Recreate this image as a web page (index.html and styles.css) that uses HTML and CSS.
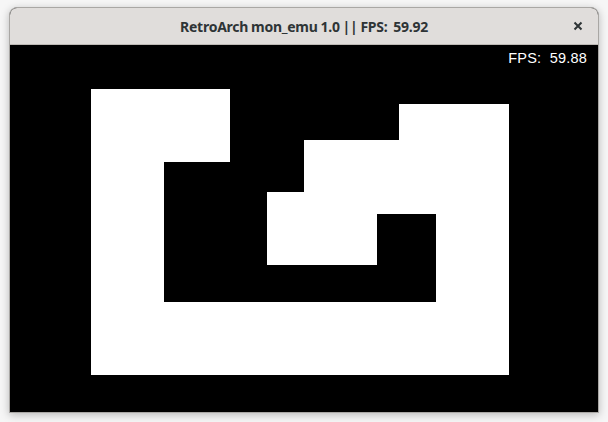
FILE: index.html
```html
<!DOCTYPE html>
<html>
<head>
<meta charset="utf-8">
<link rel="stylesheet" href="styles.css">
</head>
<body>
<div class="window">
  <div class="titlebar">
    <span class="spacer"></span>
    <span class="title">RetroArch mon_emu 1.0 || FPS:&nbsp; 59.92</span>
    <span class="controls">
      <svg class="close" width="10" height="10" viewBox="0 0 10 10"><path d="M1.5 1.5 L8.5 8.5 M8.5 1.5 L1.5 8.5" stroke="#2e3436" stroke-width="2" stroke-linecap="butt"/></svg>
    </span>
  </div>
  <div class="screen">
    <svg class="game" width="588" height="367" viewBox="0 0 588 367">
      <g fill="#fff" shape-rendering="crispEdges">
        <rect x="81" y="44" width="73" height="286"/>
        <rect x="81" y="44" width="139" height="73"/>
        <rect x="81" y="257" width="418" height="73"/>
        <rect x="426" y="59" width="73" height="271"/>
        <rect x="389" y="59" width="110" height="36"/>
        <rect x="294" y="95" width="132" height="74"/>
        <rect x="257" y="147" width="110" height="73"/>
      </g>
    </svg>
    <div class="fps">FPS:&nbsp; 59.88</div>
  </div>
</div>
</body>
</html>
```
FILE: styles.css
```css
html, body {
  margin: 0;
  padding: 0;
  background: #f6f6f6;
}
body {
  padding: 7px 9px 0 9px;
  width: 590px;
  height: 415px;
}
.window {
  width: 588px;
  border: 1px solid #a9a7a4;
  border-radius: 8px 8px 0 0;
  box-shadow: 0 2px 8px rgba(0,0,0,0.25);
  background: #000;
}
.titlebar {
  height: 36px;
  background: #e0dddb;
  border-bottom: 1px solid #bdb9b5;
  border-radius: 7px 7px 0 0;
  display: grid;
  grid-template-columns: 1fr auto 1fr;
  align-items: center;
}
.title {
  font-family: "Noto Sans", "DejaVu Sans", sans-serif;
  font-weight: 700;
  font-size: 14px;
  color: #2e3436;
  letter-spacing: -0.25px;
  word-spacing: -0.5px;
  white-space: nowrap;
}
.controls {
  display: flex;
  justify-content: flex-end;
  padding-right: 15px;
}
.close {
  display: block;
}
.screen {
  position: relative;
  height: 367px;
  background: #000;
}
.game {
  display: block;
}
.fps {
  position: absolute;
  top: 5px;
  right: 11px;
  font-family: "Liberation Sans", Arial, sans-serif;
  font-size: 14.5px;
  letter-spacing: 0.2px;
  color: #fff;
  white-space: pre;
}
```
